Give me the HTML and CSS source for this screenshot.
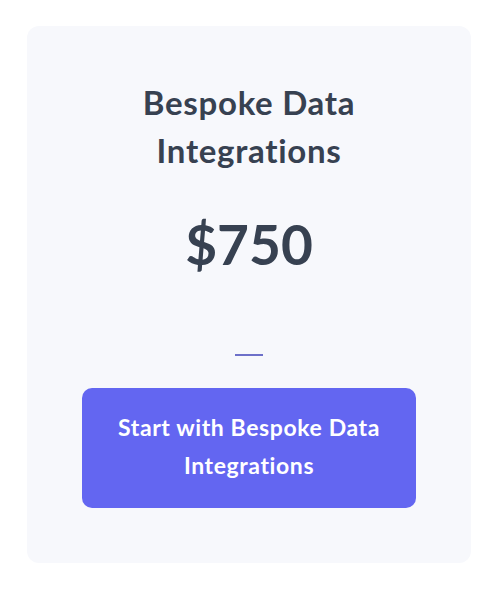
FILE: index.html
```html
<!DOCTYPE html>
<html lang="en">
<head>
    <meta charset="UTF-8">
    <meta name="viewport" content="width=device-width, initial-scale=1.0">
    <title>Bespoke Data Integrations</title>
    <link rel="stylesheet" href="styles.css">
</head>
<body>
    <div class="plan-card">
        <h2 class="plan-title">Bespoke Data Integrations</h2>
        <div class="plan-price">$750</div>
        <div class="plan-divider"></div>
        <button class="plan-btn">Start with Bespoke Data Integrations</button>
    </div>
</body>
</html>
```

FILE: styles.css
```css
body {
    font-family: 'Lato', 'Noto Sans', sans-serif;
    font-variant-ligatures: none;
    margin: 0;
    padding: 26px 29px 29px 27px;
    background-color: #ffffff;
}
.plan-card {
    display: flex;
    flex-direction: column;
    align-items: center;
    background-color: #f7f8fc;
    border-radius: 12px;
    padding: 52px 55px 55px;
}
.plan-title {
    margin: 0;
    width: 250px;
    text-align: center;
    font-size: 33px;
    line-height: 48px;
    font-weight: 700;
    letter-spacing: 0.7px;
    color: #374151;
}
.plan-price {
    margin-top: 42px;
    font-size: 55px;
    line-height: 56px;
    font-weight: 700;
    color: #374151;
}
.plan-divider {
    margin-top: 82px;
    width: 28px;
    height: 2px;
    background-color: #6d70c9;
}
.plan-btn {
    margin-top: 32px;
    width: 100%;
    padding: 20px 24px 24px;
    border: none;
    border-radius: 10px;
    background-color: #6366f1;
    color: #ffffff;
    font-family: inherit;
    font-variant-ligatures: none;
    font-size: 23px;
    line-height: 38px;
    font-weight: 700;
    letter-spacing: 0.6px;
    cursor: pointer;
}
```
